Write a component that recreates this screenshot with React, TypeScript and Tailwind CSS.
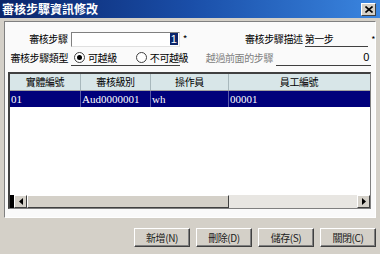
import React from 'react';

const cjk = { fontFamily: '"Noto Sans CJK TC", "Noto Sans CJK SC", sans-serif' };

function Radio({ checked, label }: { checked: boolean; label: string }) {
    return (
        <div className="flex items-center gap-[3px]">
            <div className="w-[11px] h-[11px] rounded-full border border-[#404040] bg-white flex items-center justify-center">
                {checked && <div className="w-[5px] h-[5px] rounded-full bg-black" />}
            </div>
            <span>{label}</span>
        </div>
    );
}

function WinButton({ label }: { label: string }) {
    return (
        <button className="w-[56px] h-[19px] bg-[#d4d0c8] border border-t-white border-l-white border-b-[#404040] border-r-[#404040] shadow-[inset_-1px_-1px_0_#808080] text-[10px] text-[#202020] leading-none flex items-center justify-center">
            {label}
        </button>
    );
}

export default function App() {
    const cols = [
        { title: '實體編號', w: 'w-[71px]', v: '01' },
        { title: '審核級別', w: 'w-[70px]', v: 'Aud0000001' },
        { title: '操作員', w: 'w-[78px]', v: 'wh' },
        { title: '員工編號', w: 'w-[140px]', v: '00001' },
    ];

    return (
        <div className="w-[380px] h-[254px] bg-[#d4d0c8] flex flex-col overflow-hidden text-[10px] leading-none text-black whitespace-nowrap tracking-[-0.4px]" style={cjk}>
            {/* title bar */}
            <div className="h-[18px] flex items-center justify-between pl-[2px] pr-[4px] bg-gradient-to-r from-[#0a246a] via-[#1a4ea8] to-[#3b86e0]">
                <span className="text-white text-[12px] font-bold tracking-normal">審核步驟資訊修改</span>
                <div className="w-[15px] h-[13px] bg-[#d4d0c8] border border-t-white border-l-white border-b-[#404040] border-r-[#404040] flex items-center justify-center">
                    <svg width="8" height="7" viewBox="0 0 8 7">
                        <path d="M0.5 0.5 L7.5 6.5 M7.5 0.5 L0.5 6.5" stroke="black" strokeWidth="1.6" />
                    </svg>
                </div>
            </div>

            {/* main panel */}
            <div className="mx-[4px] mt-[3px] h-[197px] border border-t-[#808080] border-l-[#808080] border-b-white border-r-white bg-[#fafafa] flex flex-col">
                {/* row 1 */}
                <div className="flex items-center h-[16px] mt-[9px]">
                    <div className="w-[63px] text-right">審核步驟</div>
                    <div className="ml-[3px] w-[110px] h-[15px] bg-white border border-t-[#808080] border-l-[#808080] border-b-[#e0e0e0] border-r-[#e0e0e0] flex items-center justify-end pr-[1px]">
                        <span className="bg-[#0a246a] text-white px-[1px] leading-[12px] text-[11px] tracking-normal" style={{ fontFamily: '"Liberation Sans", sans-serif' }}>1</span>
                    </div>
                    <span className="ml-[3px] text-[10px]">*</span>
                    <div className="ml-[47px] w-[69px] text-right">審核步驟描述</div>
                    <div className="ml-[2px] w-[64px] h-[15px] border-b border-[#404040] flex items-center">第一步</div>
                    <span className="ml-[3px] text-[9px]">*</span>
                </div>
                {/* row 2 */}
                <div className="flex items-center h-[16px] mt-[3px]">
                    <div className="w-[63px] text-right">審核步驟類型</div>
                    <div className="ml-[3px] w-[109px] h-[15px] border-b border-[#404040] flex items-center gap-[19px] pl-[3px]">
                        <Radio checked label="可越級" />
                        <Radio checked={false} label="不可越級" />
                    </div>
                    <div className="ml-[22px] w-[71px] text-right text-[#808080]">越過前面的步驟</div>
                    <div className="ml-[3px] w-[95px] h-[15px] border-b border-[#404040] flex items-center justify-end pr-[2px] text-[11px]" style={{ fontFamily: '"Liberation Sans", sans-serif' }}>0</div>
                </div>

                {/* grid */}
                <div className="ml-[3px] mt-[6px] w-[363px] h-[137px] border-t-2 border-l-2 border-t-[#404040] border-l-[#404040] border-r border-b border-r-[#808080] border-b-[#808080] bg-white flex flex-col">
                    <div className="flex h-[17px] bg-[#d8e6e8] border-b border-[#a0a0a0]">
                        {cols.map((c, i) => (
                            <div key={i} className={`${c.w} flex items-center justify-center ${i < cols.length - 1 ? 'border-r border-[#a8b8bc]' : ''}`}>{c.title}</div>
                        ))}
                    </div>
                    <div className="flex h-[16px] bg-[#00007b] text-white text-[11px] tracking-normal" style={{ fontFamily: '"Liberation Serif", serif' }}>
                        {cols.map((c, i) => (
                            <div key={i} className={`${c.w} flex items-center pl-[1px] ${i < cols.length - 1 ? 'border-r border-[#5a5aa8]' : ''}`}>{c.v}</div>
                        ))}
                    </div>
                    <div className="flex-1" />
                    {/* horizontal scrollbar */}
                    <div className="flex h-[13px] items-stretch bg-[#e8e6e2]">
                        <div className="w-[4px] bg-black" />
                        <div className="w-[13px] bg-[#d4d0c8] border border-t-white border-l-white border-b-[#404040] border-r-[#404040] flex items-center justify-center">
                            <svg width="4" height="7" viewBox="0 0 4 7"><path d="M4 0 L0 3.5 L4 7 Z" fill="black" /></svg>
                        </div>
                        <div className="w-[202px] bg-[#d4d0c8] border border-t-white border-l-white border-b-[#404040] border-r-[#404040]" />
                        <div className="flex-1" />
                        <div className="w-[13px] bg-[#d4d0c8] border border-t-white border-l-white border-b-[#404040] border-r-[#404040] flex items-center justify-center">
                            <svg width="4" height="7" viewBox="0 0 4 7"><path d="M0 0 L4 3.5 L0 7 Z" fill="black" /></svg>
                        </div>
                    </div>
                </div>
            </div>

            {/* buttons */}
            <div className="flex justify-end gap-[6px] pr-[4px] mt-[10px]">
                <WinButton label="新增(N)" />
                <WinButton label="刪除(D)" />
                <WinButton label="儲存(S)" />
                <WinButton label="關閉(C)" />
            </div>
        </div>
    );
}
